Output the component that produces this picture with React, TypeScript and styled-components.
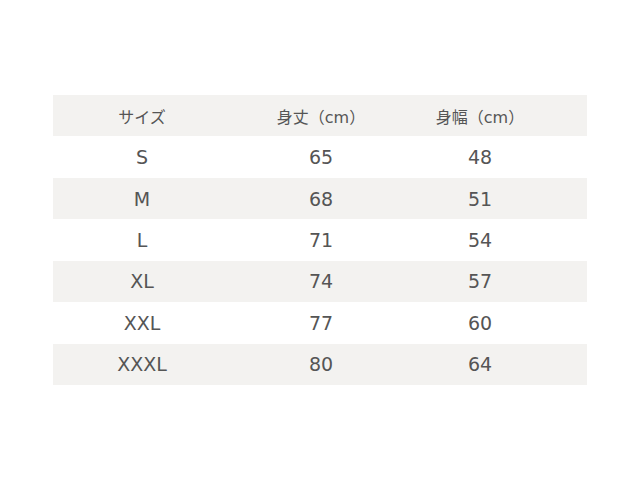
import React from "react";
import styled, { createGlobalStyle } from "styled-components";

const Global = createGlobalStyle`
  html, body { margin: 0; padding: 0; background: #fff; }
  body { font-family: "DejaVu Sans", "Noto Sans CJK JP", sans-serif; color: #555; }
`;

const Page = styled.div`
  width: 640px;
  height: 480px;
  padding: 95px 53px 0 53px;
  box-sizing: border-box;
`;

const Table = styled.div`
  width: 534px;
  display: flex;
  flex-direction: column;
`;

const Row = styled.div<{ $shaded: boolean }>`
  display: grid;
  grid-template-columns: 178px 180px 138px 1fr;
  height: 41.45px;
  align-items: center;
  background: ${(p) => (p.$shaded ? "#f3f2f0" : "#fff")};
`;

const Cell = styled.div<{ $head?: boolean }>`
  text-align: center;
  font-family: "DejaVu Sans", "Noto Sans CJK JP", sans-serif;
  font-size: ${(p) => (p.$head ? "16px" : "19px")};
  color: #555;
  white-space: nowrap;
`;

const rows: [string, string, string][] = [
  ["S", "65", "48"],
  ["M", "68", "51"],
  ["L", "71", "54"],
  ["XL", "74", "57"],
  ["XXL", "77", "60"],
  ["XXXL", "80", "64"],
];

export default function App() {
  return (
    <>
      <Global />
      <Page>
        <Table>
          <Row $shaded>
            <Cell $head>サイズ</Cell>
            <Cell $head>身丈（cm）</Cell>
            <Cell $head>身幅（cm）</Cell>
            <Cell />
          </Row>
          {rows.map((r, i) => (
            <Row key={r[0]} $shaded={i % 2 === 1}>
              <Cell>{r[0]}</Cell>
              <Cell>{r[1]}</Cell>
              <Cell>{r[2]}</Cell>
              <Cell />
            </Row>
          ))}
        </Table>
      </Page>
    </>
  );
}
